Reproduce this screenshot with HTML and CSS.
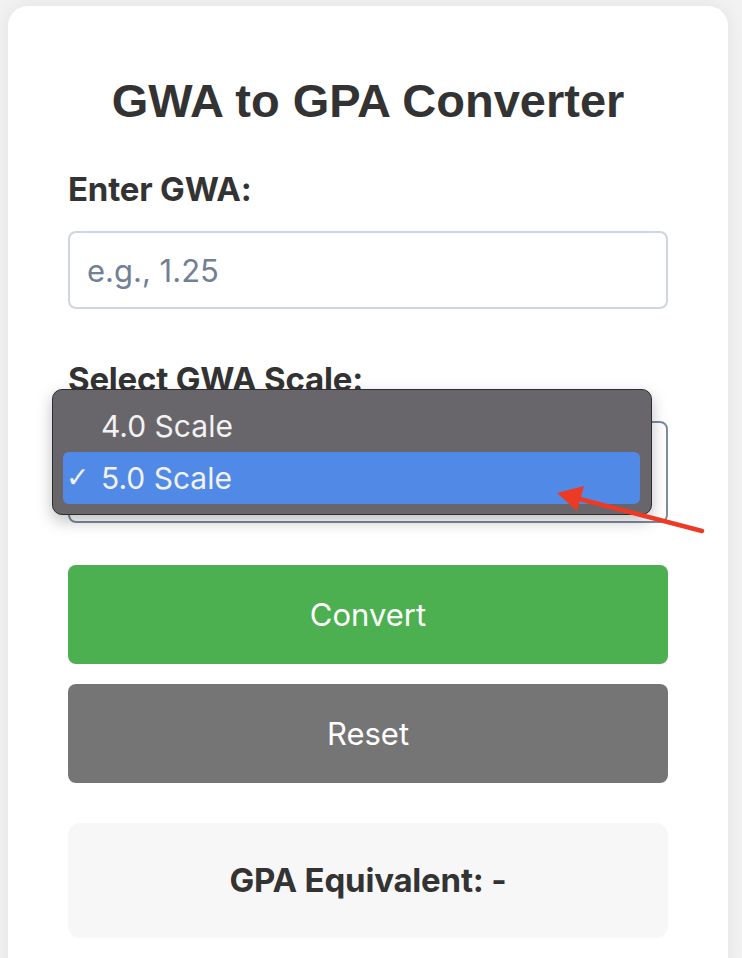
FILE: index.html
```html
<!DOCTYPE html>
<html lang="en">
<head>
<meta charset="UTF-8">
<title>GWA to GPA Converter</title>
<link rel="stylesheet" href="styles.css">
</head>
<body>
<div class="container">
  <h1>GWA to GPA Converter</h1>
  <div class="field">
    <label for="gwa">Enter GWA:</label>
    <input type="text" id="gwa" placeholder="e.g., 1.25">
  </div>
  <div class="field">
    <label for="scale">Select GWA Scale:</label>
    <div class="select-wrap">
      <div class="select-box" id="scale"></div>
      <!-- open native dropdown -->
      <ul class="dropdown">
        <li class="option">4.0 Scale</li>
        <li class="option selected"><span class="check">✓</span>5.0 Scale</li>
      </ul>
    </div>
  </div>
  <button class="btn btn-convert">Convert</button>
  <button class="btn btn-reset">Reset</button>
  <div class="result">GPA Equivalent: -</div>
</div>
<svg class="pointer" width="160" height="60" viewBox="0 0 160 60">
  <line x1="152" y1="51" x2="22" y2="17" stroke="#ec3a24" stroke-width="4.5" stroke-linecap="round"/>
  <polygon points="7,13 34,6 27,31" fill="#ec3a24"/>
</svg>
</body>
</html>
```

FILE: styles.css
```css
html, body {
    margin: 0;
}
body {
    background: #f2f2f2;
    font-family: Inter, "Noto Sans", sans-serif;
    color: #333;
}
.container {
    width: 600px;
    margin: 6px 0 0 8px;
    padding: 67px 60px 40px;
    background: #fff;
    border-radius: 20px;
    box-shadow: 0 0 18px rgba(0, 0, 0, 0.07);
}
h1 {
    margin: 0 0 40px;
    font-family: "Liberation Sans", Arial, sans-serif;
    font-size: 47px;
    line-height: 56px;
    font-weight: bold;
    text-align: center;
}
.field {
    margin-bottom: 48px;
}
.field:first-of-type {
    margin-bottom: 50px;
}
.field label {
    display: block;
    font-size: 33px;
    line-height: 40px;
    font-weight: 700;
    letter-spacing: -0.2px;
    margin-bottom: 22px;
}
.field input {
    display: block;
    box-sizing: border-box;
    width: 100%;
    height: 78px;
    padding: 0 17px;
    border: 2px solid #cfd6df;
    border-radius: 8px;
    font-family: Inter, sans-serif;
    font-size: 31px;
    color: #333;
    outline: none;
}
.field input::placeholder {
    color: #718096;
}
.select-wrap {
    position: relative;
}
.select-box {
    box-sizing: border-box;
    height: 102px;
    border: 2px solid #7d8aa0;
    border-radius: 8px;
}
.dropdown {
    position: absolute;
    top: -32px;
    left: -16px;
    width: 600px;
    box-sizing: border-box;
    margin: 0;
    padding: 10px 11px 10px 10px;
    list-style: none;
    background: #69666b;
    border: 1px solid #2e2d30;
    border-radius: 10px;
    box-shadow: 0 6px 16px rgba(0, 0, 0, 0.25);
}
.option {
    position: relative;
    height: 52px;
    line-height: 52px;
    padding-left: 38px;
    font-size: 30px;
    color: #f2f2f2;
    border-radius: 6px;
}
.option.selected {
    background: #518ae6;
}
.check {
    position: absolute;
    left: 3px;
    font-family: "DejaVu Sans", sans-serif;
    font-size: 28px;
}
.btn {
    display: block;
    width: 100%;
    height: 99px;
    border: none;
    border-radius: 8px;
    font-family: Inter, sans-serif;
    font-size: 31px;
    color: #fff;
    cursor: pointer;
}
.btn-convert {
    margin-top: -6px;
    background: #4caf50;
}
.btn-reset {
    margin-top: 20px;
    background: #757575;
}
.result {
    margin-top: 40px;
    height: 115px;
    line-height: 115px;
    background: #f7f7f7;
    border-radius: 12px;
    text-align: center;
    font-size: 33px;
    font-weight: 700;
    letter-spacing: -0.2px;
}
.pointer {
    position: absolute;
    left: 550px;
    top: 480px;
}
```
